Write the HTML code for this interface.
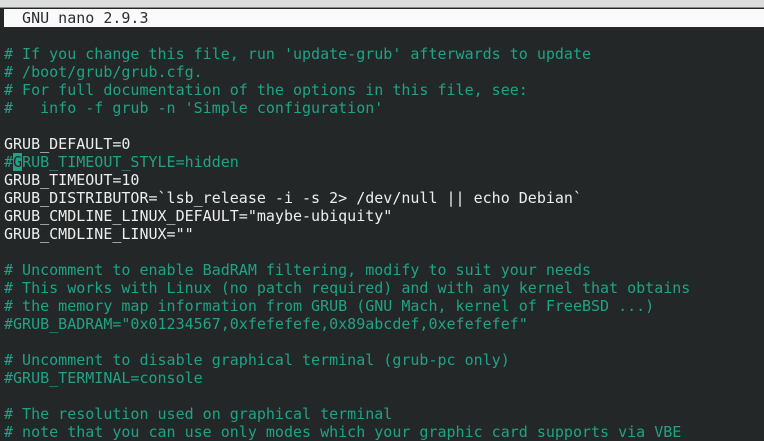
<!DOCTYPE html>
<html><head><meta charset="utf-8"><style>
html,body{margin:0;padding:0;width:764px;height:437px;overflow:hidden;background:#232728;}
.top{position:absolute;left:0;top:0;width:764px;height:7px;background:#dcdcdc;border-bottom:1px solid #8a8a8a;}
.scr{position:absolute;left:4px;top:9px;right:0;font-family:"DejaVu Sans Mono","Liberation Mono",monospace;font-size:15px;line-height:18px;white-space:pre;color:#eeeeec;}
.t{background:#fafafa;color:#2a2e30;height:18px;}
.c{color:#1fa386;}
.cur{background:#1fa386;color:#232728;}
</style></head><body>
<div class="top"></div>
<div class="scr"><div class="t">  GNU nano 2.9.3</div><div> </div><div class="c"># If you change this file, run 'update-grub' afterwards to update</div><div class="c"># /boot/grub/grub.cfg.</div><div class="c"># For full documentation of the options in this file, see:</div><div class="c">#   info -f grub -n 'Simple configuration'</div><div> </div><div>GRUB_DEFAULT=0</div><div class="c">#<span class="cur">G</span>RUB_TIMEOUT_STYLE=hidden</div><div>GRUB_TIMEOUT=10</div><div>GRUB_DISTRIBUTOR=`lsb_release -i -s 2&gt; /dev/null || echo Debian`</div><div>GRUB_CMDLINE_LINUX_DEFAULT="maybe-ubiquity"</div><div>GRUB_CMDLINE_LINUX=""</div><div> </div><div class="c"># Uncomment to enable BadRAM filtering, modify to suit your needs</div><div class="c"># This works with Linux (no patch required) and with any kernel that obtains</div><div class="c"># the memory map information from GRUB (GNU Mach, kernel of FreeBSD ...)</div><div class="c">#GRUB_BADRAM="0x01234567,0xfefefefe,0x89abcdef,0xefefefef"</div><div> </div><div class="c"># Uncomment to disable graphical terminal (grub-pc only)</div><div class="c">#GRUB_TERMINAL=console</div><div> </div><div class="c"># The resolution used on graphical terminal</div><div class="c"># note that you can use only modes which your graphic card supports via VBE</div></div>
</body></html>
